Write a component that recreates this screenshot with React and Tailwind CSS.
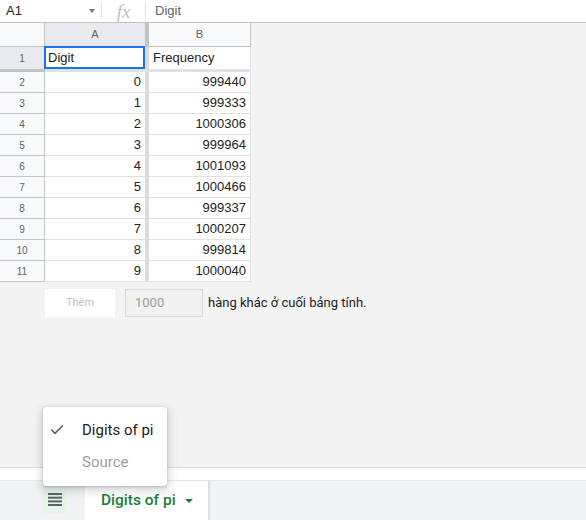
import React from 'react'
import { Check } from 'lucide-react'

const ROWS = [
  ['0', '999440'],
  ['1', '999333'],
  ['2', '1000306'],
  ['3', '999964'],
  ['4', '1001093'],
  ['5', '1000466'],
  ['6', '999337'],
  ['7', '1000207'],
  ['8', '999814'],
  ['9', '1000040'],
]

const cellFont = { fontFamily: '"Liberation Sans", Arial, sans-serif' }
const uiFont = { fontFamily: 'Roboto, "Liberation Sans", sans-serif' }

export default function App() {
  return (
    <div className="relative w-[586px] h-[520px] overflow-hidden bg-[#f3f3f3] flex flex-col" style={cellFont}>
      {/* Formula bar */}
      <div className="h-[23px] shrink-0 bg-white border-b border-[#c4c4c4] flex items-center text-[13px]">
        <div className="w-[101px] h-full flex items-center pl-[6px] pr-[6px] text-[#222]">
          <span className="flex-1">A1</span>
          <span className="w-0 h-0 border-l-[3px] border-r-[3px] border-t-[4px] border-l-transparent border-r-transparent border-t-[#777]" />
        </div>
        <div className="w-px h-[16px] bg-[#e0e0e0]" />
        <div className="w-[43px] flex justify-center text-[#c0c0c0] italic text-[19px] leading-none" style={{ fontFamily: '"Liberation Serif", serif' }}>fx</div>
        <div className="w-px h-[16px] bg-[#e0e0e0]" />
        <div className="pl-[9px] text-[#5f6368]">Digit</div>
      </div>

      {/* Grid */}
      <div className="flex flex-col w-[251px]">
        {/* column header */}
        <div className="flex h-[24px] border-b border-[#c4c4c4] text-[11px] text-[#5f6368]">
          <div className="w-[45px] bg-[#f8f9fa] border-r border-[#c4c4c4]" />
          <div className="w-[100px] bg-[#e8eaed] flex items-center justify-center">A</div>
          <div className="w-[4px] bg-[#c4c4c4]" />
          <div className="w-[102px] bg-[#f8f9fa] border-r border-[#c4c4c4] flex items-center justify-center">B</div>
        </div>
        {/* row 1 */}
        <div className="flex h-[22px] text-[13px]">
          <div className="w-[45px] bg-[#e8eaed] border-r border-[#c4c4c4] flex items-center justify-center text-[10px] text-[#5f6368]">1</div>
          <div className="w-[100px] bg-white relative flex items-center px-[2px] text-[#222]">
            <div className="absolute left-[-1px] right-0 top-[-1px] bottom-0 border-2 border-[#1a73e8]" />
            <span className="pl-[1px]">Digit</span>
          </div>
          <div className="w-[4px] bg-[#dadce0]" />
          <div className="w-[102px] bg-white border-r border-[#e2e2e3] flex items-center px-[4px] text-[#222]">Frequency</div>
        </div>
        {/* frozen line */}
        <div className="flex h-[3px]">
          <div className="w-[45px] bg-[#c4c4c4]" />
          <div className="w-[206px] bg-[#dfe3e8]" />
        </div>
        {ROWS.map((r, i) => (
          <div key={i} className="flex h-[21px] text-[13px]">
            <div className="w-[45px] bg-[#f8f9fa] border-r border-b border-[#c4c4c4] flex items-center justify-center text-[10px] text-[#5f6368]">{i + 2}</div>
            <div className="w-[100px] bg-white border-b border-[#e2e2e3] flex items-center justify-end pr-[4px] text-[#222]">{r[0]}</div>
            <div className="w-[4px] bg-[#dadce0]" />
            <div className="w-[102px] bg-white border-b border-r border-[#e2e2e3] flex items-center justify-end pr-[4px] text-[#222]">{r[1]}</div>
          </div>
        ))}
      </div>

      {/* Add rows */}
      <div className="flex items-center mt-[7px] pl-[45px] h-[28px]" style={uiFont}>
        <div className="w-[70px] h-[28px] bg-white flex items-center justify-center text-[11px] text-[#bdbdbd]">Thêm</div>
        <div className="ml-[10px] w-[78px] h-[28px] bg-[#f1f1f1] border border-[#d9d9d9] flex items-center pl-[9px] text-[13px] text-[#9e9e9e]">1000</div>
        <div className="ml-[5px] text-[13px] text-[#222]">hàng khác ở cuối bảng tính.</div>
      </div>

      <div className="flex-1" />

      {/* bottom */}
      <div className="h-[13px] shrink-0 bg-white border-t border-[#dadce0]" />
      <div className="h-[40px] shrink-0 bg-[#f1f3f4] border-t border-[#e8eaed] flex items-stretch" style={uiFont}>
        <div className="w-[43px]" />
        <div className="w-[24px] h-[27px] mt-[5px] bg-[#e6f4ea] flex items-center justify-center">
          <svg width="14" height="13" viewBox="0 0 14 13">
            <rect x="0" y="0" width="14" height="2" fill="#5f6368" />
            <rect x="0" y="3.7" width="14" height="2" fill="#5f6368" />
            <rect x="0" y="7.4" width="14" height="2" fill="#5f6368" />
            <rect x="0" y="11" width="14" height="2" fill="#5f6368" />
          </svg>
        </div>
        <div className="w-[18px]" />
        <div className="w-[124px] bg-white border-r border-[#dadce0] flex items-center pl-[16px] text-[15.5px] font-medium text-[#188038] shadow-[1px_0_2px_rgba(0,0,0,0.08)]">
          <span>Digits of pi</span>
          <span className="ml-[9px] w-0 h-0 border-l-[4px] border-r-[4px] border-t-[4px] border-l-transparent border-r-transparent border-t-[#188038]" />
        </div>
      </div>

      {/* sheet menu */}
      <div className="absolute left-[43px] top-[407px] w-[124px] h-[79px] bg-white rounded-[4px] shadow-[0_1px_3px_rgba(60,64,67,0.3),0_4px_8px_3px_rgba(60,64,67,0.15)] py-[7px] text-[15px]" style={uiFont}>
        <div className="h-[32px] flex items-center">
          <div className="w-[39px] flex justify-start pl-[6px]">
            <Check className="w-[16px] h-[16px] text-[#5f6368]" strokeWidth={2.5} />
          </div>
          <span className="text-[#202124]">Digits of pi</span>
        </div>
        <div className="h-[32px] flex items-center">
          <div className="w-[39px]" />
          <span className="text-[#9aa0a6]">Source</span>
        </div>
      </div>
    </div>
  )
}
